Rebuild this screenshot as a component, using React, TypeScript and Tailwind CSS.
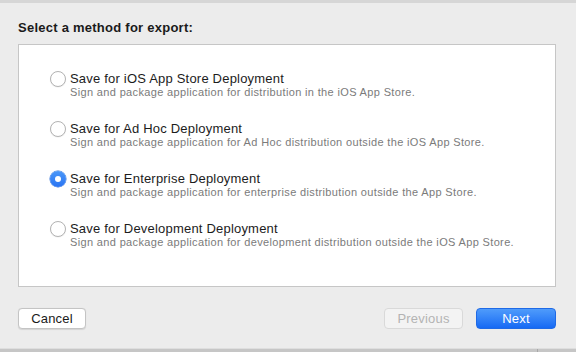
const options = [
  {
    title: 'Save for iOS App Store Deployment',
    detail: 'Sign and package application for distribution in the iOS App Store.',
  },
  {
    title: 'Save for Ad Hoc Deployment',
    detail: 'Sign and package application for Ad Hoc distribution outside the iOS App Store.',
  },
  {
    title: 'Save for Enterprise Deployment',
    detail: 'Sign and package application for enterprise distribution outside the App Store.',
  },
  {
    title: 'Save for Development Deployment',
    detail: 'Sign and package application for development distribution outside the iOS App Store.',
  },
];

function Radio({ checked }: { checked: boolean }) {
  if (checked) {
    return (
      <span className="flex h-4 w-4 shrink-0 items-center justify-center rounded-full bg-gradient-to-b from-[#4a97f8] to-[#2a74f3] shadow-[0_0_0_0.5px_#2c6fd8]">
        <span className="h-[6px] w-[6px] rounded-full bg-white" />
      </span>
    );
  }
  return (
    <span className="h-4 w-4 shrink-0 rounded-full border border-[#b3b3b3] bg-white shadow-[0_0.5px_1px_rgba(0,0,0,0.08)]" />
  );
}

export default function App() {
  const selected = 2;

  return (
    <div className="flex h-[352px] w-[576px] flex-col bg-[#ececec] font-['Liberation_Sans',Arial,sans-serif] text-black">
      <div className="h-[3px] bg-[#d6d6d6]" />

      <h1 className="ml-[18px] mr-[20px] mt-[17px] text-[13px] font-bold leading-[16px] tracking-[0.25px] text-[#1a1a1a]">
        Select a method for export:
      </h1>

      <div className="ml-[18px] mr-[20px] mt-[8px] flex h-[243px] flex-col gap-[23px] border border-[#c6c6c6] bg-white pl-[31px] pt-[26px]">
        {options.map((opt, i) => (
          <div key={opt.title} className="flex flex-col">
            <div className="flex h-[15px] items-center gap-[4px]">
              <Radio checked={i === selected} />
              <span className="text-[13px] leading-[15px] tracking-[0.2px] text-[#1c1c1c]">{opt.title}</span>
            </div>
            <p className="pl-[20px] text-[11px] leading-[12px] tracking-[0.35px] text-[#7b7b7b]">{opt.detail}</p>
          </div>
        ))}
      </div>

      <div className="ml-[18px] mr-[20px] mt-[21px] flex items-center">
        <button className="h-[21px] w-[68px] rounded-[4px] border border-[#c4c4c4] bg-white text-[13px] leading-none tracking-[0.2px] text-[#1a1a1a] shadow-[0_0.5px_1px_rgba(0,0,0,0.1)]">
          Cancel
        </button>
        <div className="ml-auto flex gap-[13px]">
          <button className="h-[21px] w-[79px] rounded-[4px] border border-[#d9d9d9] bg-[#f3f3f3] text-[13px] leading-none tracking-[0.2px] text-[#b3b3b3]">
            Previous
          </button>
          <button className="h-[21px] w-[80px] rounded-[4px] border border-[#1f6ae6] bg-gradient-to-b from-[#4f9bfb] to-[#1569f4] text-[13px] leading-none tracking-[0.2px] text-white">
            Next
          </button>
        </div>
      </div>

      <div className="mt-auto flex h-[4px] flex-col">
        <div className="h-[1px] bg-[#dedede]" />
        <div className="flex flex-1 bg-[#c6c6c6]">
          <div className="w-[537px]" />
          <div className="w-[1px] bg-[#a8a8a8]" />
        </div>
      </div>
    </div>
  );
}
